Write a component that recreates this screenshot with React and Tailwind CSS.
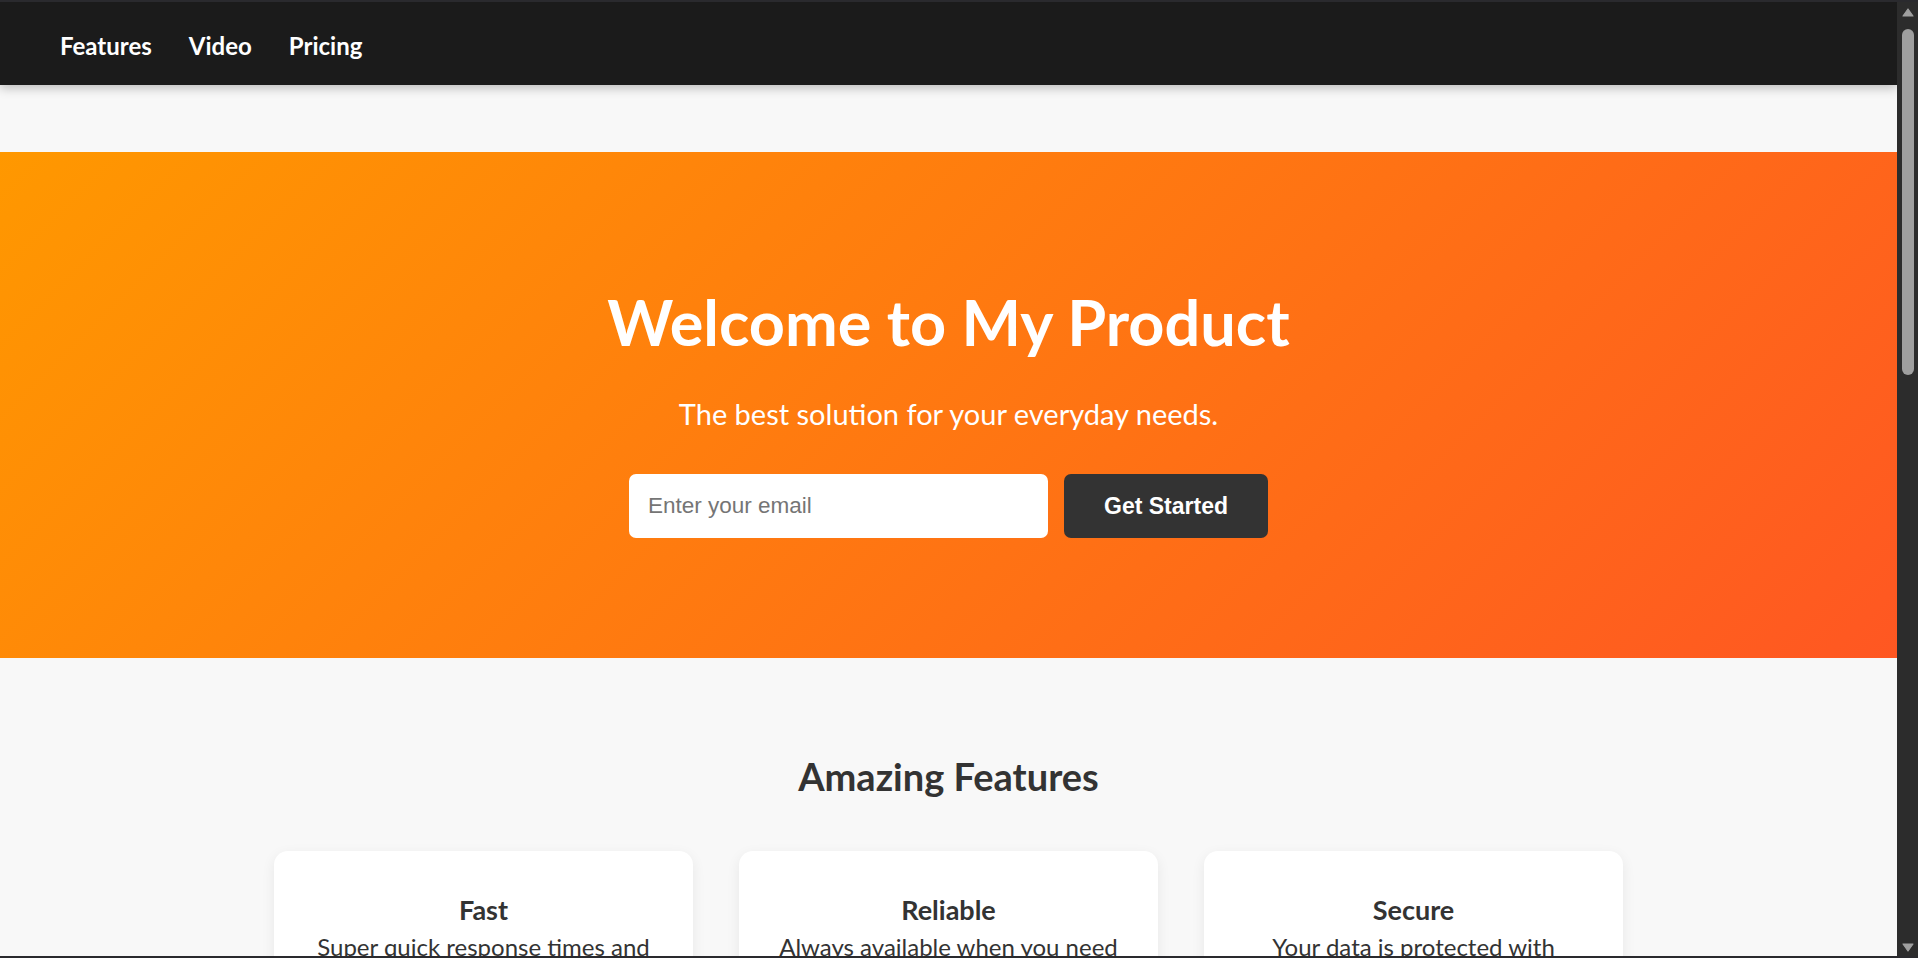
import React from 'react'

const features = [
  { title: 'Fast', text: 'Super quick response times and seamless performance for everyone.' },
  { title: 'Reliable', text: 'Always available when you need it, day or night, without fail.' },
  { title: 'Secure', text: 'Your data is protected with industry-leading encryption.' },
]

const plans = [
  { name: 'Basic', price: '$9', note: 'per month' },
  { name: 'Pro', price: '$19', note: 'per month' },
  { name: 'Enterprise', price: '$49', note: 'per month' },
]

function Arrow({ down }) {
  return (
    <svg width="12" height="9" viewBox="0 0 12 9" className={down ? 'rotate-180' : ''}>
      <path d="M6 1 L11 8 L1 8 Z" fill="#9f9f9f" stroke="#9f9f9f" strokeWidth="1.2" strokeLinejoin="round" />
    </svg>
  )
}

export default function App() {
  return (
    <div className="h-[958px] flex flex-col bg-[#2b2b2b] overflow-hidden" style={{ fontFamily: 'Lato, "Open Sans", sans-serif' }}>
      <div className="h-[2px] bg-[#2a2a2e] shrink-0" />

      <div className="flex-1 flex min-h-0">
        <div className="flex-1 overflow-hidden bg-[#f8f8f8]">
          <nav className="h-[83px] bg-[#1b1b1b] flex items-center gap-[37px] px-[60px] pt-[4px] shadow-[0_3px_10px_rgba(0,0,0,0.25)] relative z-10">
            <a className="text-white text-[24px] font-bold">Features</a>
            <a className="text-white text-[24px] font-bold">Video</a>
            <a className="text-white text-[24px] font-bold">Pricing</a>
          </nav>

          <section className="mt-[67px] h-[506px] bg-[linear-gradient(135deg,#ff9800,#ff5722)] flex flex-col items-center pt-[132px] text-white">
            <h1 className="text-[63px] leading-[1.22] font-bold">Welcome to My Product</h1>
            <p className="mt-[35px] text-[29px] leading-[1.24] font-normal">The best solution for your everyday needs.</p>
            <div className="mt-[42px] flex gap-[16px]">
              <input
                type="email"
                placeholder="Enter your email"
                className="w-[419px] h-[64px] rounded-[7px] bg-white px-[19px] text-[22.5px] text-[#333] placeholder-[#757575] outline-none"
                style={{ fontFamily: '"Liberation Sans", Arial, sans-serif' }}
              />
              <button
                className="w-[204px] h-[64px] rounded-[7px] bg-[#333333] text-white text-[23px] font-bold"
                style={{ fontFamily: '"Liberation Sans", Arial, sans-serif' }}
              >
                Get Started
              </button>
            </div>
          </section>

          <section className="pt-[96px] pb-[90px]">
            <h2 className="text-center text-[38px] leading-[1.2] font-bold text-[#333]">Amazing Features</h2>
            <div className="mt-[51px] w-[1349px] mx-auto grid grid-cols-3 gap-[46px]">
              {features.map(f => (
                <div key={f.title} className="bg-white rounded-[14px] shadow-[0_4px_14px_rgba(0,0,0,0.07)] pt-[43px] pb-[40px] px-[40px] text-center">
                  <h3 className="text-[27px] leading-[1.2] font-bold text-[#333]">{f.title}</h3>
                  <p className="mt-[3px] text-[24px] leading-[1.5] text-[#333]">{f.text}</p>
                </div>
              ))}
            </div>
          </section>

          <section className="py-[90px] bg-white">
            <h2 className="text-center text-[38px] leading-[1.2] font-bold text-[#333]">See It in Action</h2>
            <div className="mt-[50px] w-[900px] h-[506px] mx-auto rounded-[14px] bg-[#222]" />
          </section>

          <section className="py-[90px]">
            <h2 className="text-center text-[38px] leading-[1.2] font-bold text-[#333]">Pricing</h2>
            <div className="mt-[50px] w-[1349px] mx-auto grid grid-cols-3 gap-[46px]">
              {plans.map(p => (
                <div key={p.name} className="bg-white rounded-[14px] shadow-[0_4px_14px_rgba(0,0,0,0.07)] py-[43px] px-[40px] text-center">
                  <h3 className="text-[27px] font-bold text-[#333]">{p.name}</h3>
                  <p className="mt-[12px] text-[44px] font-bold text-[#ff5722]">{p.price}</p>
                  <p className="text-[20px] text-[#555]">{p.note}</p>
                </div>
              ))}
            </div>
          </section>
        </div>

        <aside className="w-[21px] shrink-0 bg-[#2c2c2c] flex flex-col items-center pt-[6px] pb-[4px]">
          <Arrow />
          <div className="mt-[12px] w-[12px] h-[346px] rounded-full bg-[#9f9f9f]" />
          <div className="flex-1" />
          <Arrow down />
        </aside>
      </div>

      <div className="h-[2px] bg-[#2a2a2e] shrink-0" />
    </div>
  )
}
